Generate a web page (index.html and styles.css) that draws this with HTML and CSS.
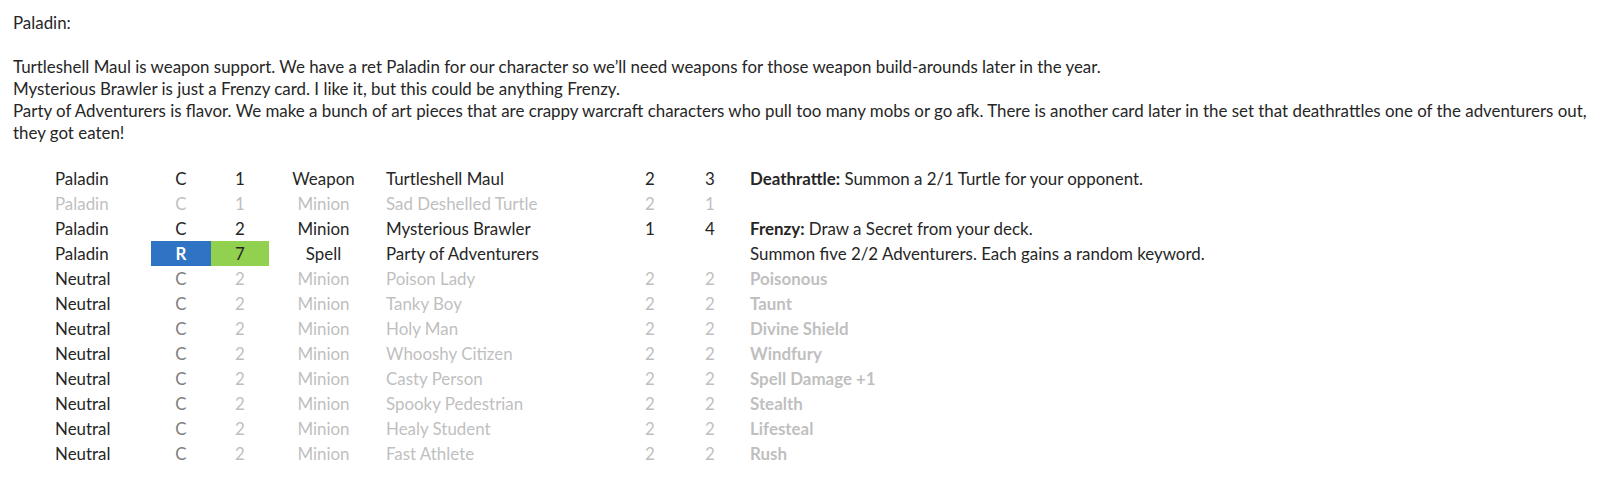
FILE: index.html
```
<!DOCTYPE html>
<html lang="en">
<head>
    <meta charset="UTF-8">
    <title>Paladin cards</title>
    <link rel="stylesheet" href="styles.css">
</head>
<body>
    <div class="mail">
        <p>Paladin:</p>
        <p class="blank">&nbsp;</p>
        <p>Turtleshell Maul is weapon support. We have a ret Paladin for our character so we’ll need weapons for those weapon build-arounds later in the year.</p>
        <p>Mysterious Brawler is just a Frenzy card. I like it, but this could be anything Frenzy.</p>
        <p>Party of Adventurers is flavor. We make a bunch of art pieces that are crappy warcraft characters who pull too many mobs or go afk. There is another card later in the set that deathrattles one of the adventurers out, they got eaten!</p>
        <p class="blank">&nbsp;</p>

        <table class="cards">
            <colgroup>
                <col class="colClass">
                <col class="colRarity">
                <col class="colCost">
                <col class="colType">
                <col class="colName">
                <col class="colAtk">
                <col class="colHp">
                <col class="colText">
            </colgroup>
            <tr>
                <td class="cls">Paladin</td>
                <td class="mid">C</td>
                <td class="mid">1</td>
                <td class="mid">Weapon</td>
                <td class="name">Turtleshell Maul</td>
                <td class="mid">2</td>
                <td class="mid">3</td>
                <td class="effect"><b>Deathrattle:</b> Summon a 2/1 Turtle for your opponent.</td>
            </tr>
            <tr class="token">
                <td class="cls">Paladin</td>
                <td class="mid">C</td>
                <td class="mid">1</td>
                <td class="mid">Minion</td>
                <td class="name">Sad Deshelled Turtle</td>
                <td class="mid">2</td>
                <td class="mid">1</td>
                <td class="effect"></td>
            </tr>
            <tr>
                <td class="cls">Paladin</td>
                <td class="mid">C</td>
                <td class="mid">2</td>
                <td class="mid">Minion</td>
                <td class="name">Mysterious Brawler</td>
                <td class="mid">1</td>
                <td class="mid">4</td>
                <td class="effect"><b>Frenzy:</b> Draw a Secret from your deck.</td>
            </tr>
            <tr>
                <td class="cls">Paladin</td>
                <td class="mid rare">R</td>
                <td class="mid costHi">7</td>
                <td class="mid">Spell</td>
                <td class="name">Party of Adventurers</td>
                <td class="mid"></td>
                <td class="mid"></td>
                <td class="effect">Summon five 2/2 Adventurers. Each gains a random keyword.</td>
            </tr>
            <tr class="token neutral">
                <td class="cls">Neutral</td>
                <td class="mid">C</td>
                <td class="mid">2</td>
                <td class="mid">Minion</td>
                <td class="name">Poison Lady</td>
                <td class="mid">2</td>
                <td class="mid">2</td>
                <td class="effect"><b>Poisonous</b></td>
            </tr>
            <tr class="token neutral">
                <td class="cls">Neutral</td>
                <td class="mid">C</td>
                <td class="mid">2</td>
                <td class="mid">Minion</td>
                <td class="name">Tanky Boy</td>
                <td class="mid">2</td>
                <td class="mid">2</td>
                <td class="effect"><b>Taunt</b></td>
            </tr>
            <tr class="token neutral">
                <td class="cls">Neutral</td>
                <td class="mid">C</td>
                <td class="mid">2</td>
                <td class="mid">Minion</td>
                <td class="name">Holy Man</td>
                <td class="mid">2</td>
                <td class="mid">2</td>
                <td class="effect"><b>Divine Shield</b></td>
            </tr>
            <tr class="token neutral">
                <td class="cls">Neutral</td>
                <td class="mid">C</td>
                <td class="mid">2</td>
                <td class="mid">Minion</td>
                <td class="name">Whooshy Citizen</td>
                <td class="mid">2</td>
                <td class="mid">2</td>
                <td class="effect"><b>Windfury</b></td>
            </tr>
            <tr class="token neutral">
                <td class="cls">Neutral</td>
                <td class="mid">C</td>
                <td class="mid">2</td>
                <td class="mid">Minion</td>
                <td class="name">Casty Person</td>
                <td class="mid">2</td>
                <td class="mid">2</td>
                <td class="effect"><b>Spell Damage +1</b></td>
            </tr>
            <tr class="token neutral">
                <td class="cls">Neutral</td>
                <td class="mid">C</td>
                <td class="mid">2</td>
                <td class="mid">Minion</td>
                <td class="name">Spooky Pedestrian</td>
                <td class="mid">2</td>
                <td class="mid">2</td>
                <td class="effect"><b>Stealth</b></td>
            </tr>
            <tr class="token neutral">
                <td class="cls">Neutral</td>
                <td class="mid">C</td>
                <td class="mid">2</td>
                <td class="mid">Minion</td>
                <td class="name">Healy Student</td>
                <td class="mid">2</td>
                <td class="mid">2</td>
                <td class="effect"><b>Lifesteal</b></td>
            </tr>
            <tr class="token neutral">
                <td class="cls">Neutral</td>
                <td class="mid">C</td>
                <td class="mid">2</td>
                <td class="mid">Minion</td>
                <td class="name">Fast Athlete</td>
                <td class="mid">2</td>
                <td class="mid">2</td>
                <td class="effect"><b>Rush</b></td>
            </tr>
        </table>
    </div>
</body>
</html>
```

FILE: styles.css
```
body {
    margin: 0;
    background-color: #ffffff;
    color: #262626;
    font-family: Lato, "Open Sans", sans-serif;
    font-size: 16.9px;
}
.mail {
    padding: 12px 0 0 13px;
}
p {
    margin: 0;
    line-height: 22px;
}
.cards {
    margin-left: 35px;
    border-collapse: collapse;
    table-layout: fixed;
}
.cards td {
    height: 25px;
    padding: 0;
    white-space: nowrap;
}
.colClass { width: 103px; }
.colRarity { width: 60px; }
.colCost { width: 58px; }
.colType { width: 109px; }
.colName { width: 242px; }
.colAtk { width: 60px; }
.colHp { width: 60px; }
.colText { width: 600px; }
.cls {
    padding-left: 7px !important;
}
.mid {
    text-align: center;
}
.name {
    padding-left: 8px !important;
}
.effect {
    padding-left: 10px !important;
}
.token td {
    color: #bfbfbf;
}
.neutral .cls {
    color: #262626;
}
.neutral td:nth-child(2) {
    color: #808080;
}
.rare {
    background-color: #2f74c4;
    color: #ffffff;
    font-weight: bold;
}
.costHi {
    background-color: #92d050;
}
```
